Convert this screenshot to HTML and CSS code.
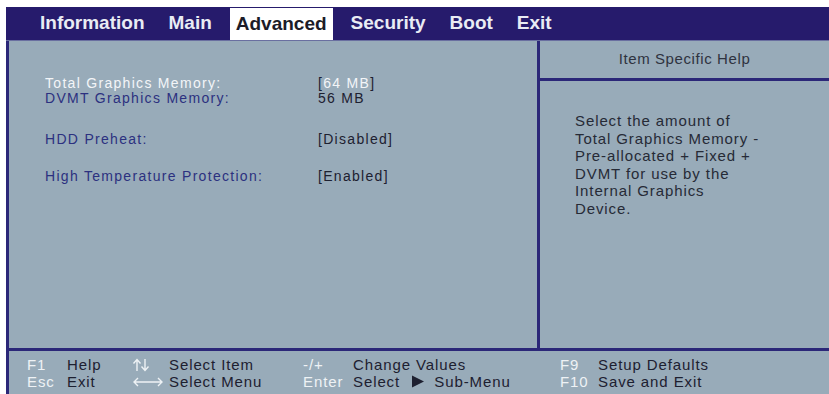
FILE: index.html
```html
<!DOCTYPE html>
<html lang="en">
<head>
<meta charset="UTF-8">
<title>BIOS Setup - Advanced</title>
<link rel="stylesheet" href="styles.css">
</head>
<body>
<div class="bios">
    <div class="menubar">
        <span class="tab">Information</span>
        <span class="tab">Main</span>
        <span class="tab active">Advanced</span>
        <span class="tab">Security</span>
        <span class="tab">Boot</span>
        <span class="tab">Exit</span>
    </div>

    <div class="screen">
        <div class="items">
            <div class="row selected first">
                <span class="label">Total Graphics Memory:</span>
                <span class="value"><span class="br">[</span>64 MB<span class="br">]</span></span>
            </div>
            <div class="row">
                <span class="label">DVMT Graphics Memory:</span>
                <span class="value">56 MB</span>
            </div>
            <div class="row hdd">
                <span class="label">HDD Preheat:</span>
                <span class="value">[Disabled]</span>
            </div>
            <div class="row temp">
                <span class="label">High Temperature Protection:</span>
                <span class="value">[Enabled]</span>
            </div>
        </div>
        <div class="help">
            <div class="help-title">Item Specific Help</div>
            <div class="help-text">
                Select the amount of<br>
                Total Graphics Memory -<br>
                Pre-allocated + Fixed +<br>
                DVMT for use by the<br>
                Internal Graphics<br>
                Device.
            </div>
        </div>
    </div>

    <div class="keys">
        <span class="key">F1</span>
        <span class="desc">Help</span>
        <span class="key icon">
            <svg width="18" height="14" viewBox="0 0 18 14">
                <path d="M5 13V2M1.5 5.5L5 1.5L8.5 5.5M13 1V12M9.5 8.5L13 12.5L16.5 8.5" fill="none" stroke="#eef2f5" stroke-width="1.4"/>
            </svg>
        </span>
        <span class="desc">Select Item</span>
        <span class="key">-/+</span>
        <span class="desc">Change Values</span>
        <span class="key">F9</span>
        <span class="desc">Setup Defaults</span>

        <span class="key">Esc</span>
        <span class="desc">Exit</span>
        <span class="key icon">
            <svg width="32" height="12" viewBox="0 0 32 12">
                <path d="M2 6H30M6 2L2 6L6 10M26 2L30 6L26 10" fill="none" stroke="#eef2f5" stroke-width="1.4"/>
            </svg>
        </span>
        <span class="desc">Select Menu</span>
        <span class="key">Enter</span>
        <span class="desc">Select
            <svg class="tri" width="14" height="13" viewBox="0 0 14 13">
                <path d="M1 0.5L13 6.5L1 12.5Z" fill="#1d2030"/>
            </svg>
            Sub-Menu</span>
        <span class="key">F10</span>
        <span class="desc">Save and Exit</span>
    </div>
</div>
</body>
</html>
```

FILE: styles.css
```css
body {
    margin: 0;
    padding: 7px 0 0 6px;
    background-color: #ffffff;
    font-family: "Liberation Sans", Arial, sans-serif;
}
.bios {
    height: 387px;
    display: flex;
    flex-direction: column;
    background-color: #98abb9;
}
.menubar {
    height: 34px;
    display: flex;
    align-items: stretch;
    padding-left: 28px;
    background-color: #261b6c;
    border-bottom: 1px solid #6a6fa0;
    box-sizing: border-box;
}
.tab {
    display: flex;
    align-items: center;
    padding: 0 6px 1px 6px;
    margin-right: 12px;
    font-size: 19px;
    font-weight: bold;
    color: #e9ecf4;
}
.tab.active {
    background-color: #ffffff;
    color: #1c1c28;
    margin-top: 1px;
}
.screen {
    height: 310px;
    display: flex;
    border-left: 3px solid #2b2778;
    border-bottom: 3px solid #2b2778;
    box-sizing: border-box;
}
.items {
    width: 531px;
    padding: 35px 0 0 36px;
    box-sizing: border-box;
    border-right: 3px solid #2b2778;
    font-size: 14px;
    letter-spacing: 1.3px;
}
.row {
    display: flex;
    line-height: 15px;
}
.row.hdd {
    margin-top: 26px;
}
.row.temp {
    margin-top: 22px;
}
.label {
    width: 273px;
    color: #2c3180;
}
.value {
    color: #1d2030;
}
.selected .label,
.selected .value {
    color: #f3f5f8;
}
.selected .br {
    color: #1d2030;
}
.help {
    flex: 1;
    display: flex;
    flex-direction: column;
}
.help-title {
    height: 40px;
    padding-bottom: 2px;
    box-sizing: border-box;
    border-bottom: 3px solid #2b2778;
    display: flex;
    align-items: center;
    justify-content: center;
    font-size: 15px;
    letter-spacing: 0.6px;
    color: #2f3340;
}
.help-text {
    padding: 31px 0 0 35px;
    font-size: 15px;
    line-height: 17.6px;
    letter-spacing: 0.9px;
    color: #262a36;
}
.keys {
    flex: 1;
    border-left: 3px solid #2b2778;
    display: grid;
    grid-template-columns: 40px 65px 37px 134px 50px 207px 38px auto;
    grid-auto-rows: 17px;
    align-content: start;
    padding: 5px 0 0 18px;
    font-size: 15px;
    line-height: 17px;
    letter-spacing: 0.9px;
}
.key {
    color: #eef2f5;
}
.key.icon {
    display: flex;
    align-items: center;
}
.desc {
    color: #1d2030;
    white-space: nowrap;
}
.tri {
    vertical-align: -1px;
    margin: 0 4px 0 6px;
}
```
